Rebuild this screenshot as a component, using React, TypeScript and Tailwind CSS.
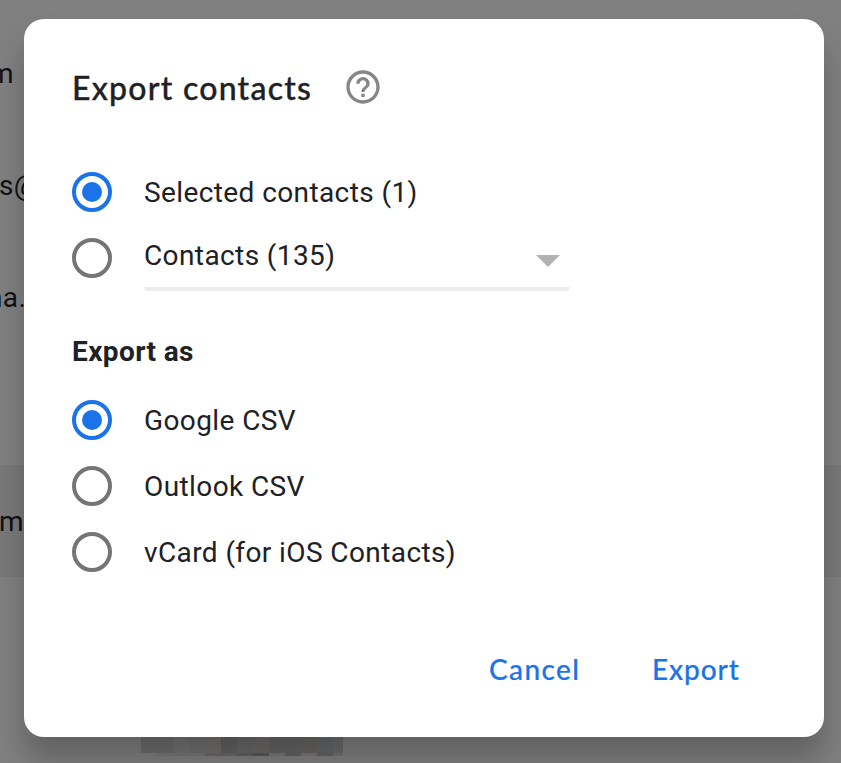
import React from "react";

const mosaicTop = [
  "#6f6f6f", "#6f6f6f", "#757575", "#6f7371", "#757270", "#646464", "#6a6a6a",
  "#6d6c69", "#666666", "#666666", "#696663", "#66696c", "#6b6d6f",
];
const mosaicBottom = [
  "transparent", "#787878", "#787878", "#787878", "#6a6a6a", "#6a6a6a", "#626262",
  "#585858", "#787878", "#646464", "#787878", "#646464", "#747474",
];

function Blocks({ colors, className }: { colors: string[]; className: string }) {
  return (
    <div className="flex w-[202px] overflow-hidden">
      {colors.map((c, i) => (
        <div key={i} className={`w-4 shrink-0 ${className}`} style={{ backgroundColor: c }} />
      ))}
    </div>
  );
}

function Row({ text = "", active = false, shift = "" }: { text?: string; active?: boolean; shift?: string }) {
  return (
    <div className={`flex h-28 items-center ${active ? "bg-[#797979]" : ""}`}>
      <span className={`pt-0.5 text-[28px] leading-8 tracking-[0.4px] text-[#101113] ${shift}`}>{text}</span>
    </div>
  );
}

function Radio({ checked = false }: { checked?: boolean }) {
  return (
    <span
      className={`flex size-10 shrink-0 items-center justify-center rounded-full border-4 ${
        checked ? "border-[#1a73e8]" : "border-[#757575]"
      }`}
    >
      {checked && <span className="size-5 rounded-full bg-[#1a73e8]" />}
    </span>
  );
}

function Option({ label, checked = false }: { label: string; checked?: boolean }) {
  return (
    <label className="flex h-10 items-center gap-8">
      <Radio checked={checked} />
      <span className="pt-0.5 whitespace-nowrap">{label}</span>
    </label>
  );
}

export default function App() {
  return (
    <div className="relative h-[763px] w-[841px] overflow-hidden bg-[#808080] font-['Roboto',sans-serif]">
      <div className="pt-[17px]">
        <Row text="m" shift="-ml-[11px]" />
        <Row text="s@" shift="-ml-px" />
        <Row text="na." shift="-ml-[13px]" />
        <Row />
        <Row text="m" active shift="-ml-px" />
        <Row />
        <div className="pt-12 pl-[141px]">
          <Blocks colors={mosaicTop} className="h-4" />
          <Blocks colors={mosaicBottom} className="h-[3px]" />
        </div>
      </div>

      <section
        role="dialog"
        className="absolute top-[19px] left-6 flex h-[718px] w-[800px] flex-col rounded-[20px] bg-white px-12 text-[28px] leading-10 tracking-[0.4px] text-[#202124] shadow-[0_24px_30px_0_rgba(0,0,0,0.24)]"
      >
        <header className="flex h-[90px] items-start gap-[31px] pt-12">
          <h1 className="w-[240px] pt-px font-['Lato',sans-serif] text-[32px] leading-10 font-medium tracking-[1.25px] whitespace-nowrap [-webkit-text-stroke:0.35px_#202124]">
            Export contacts
          </h1>
          <svg viewBox="0 0 24 24" className="size-10 fill-[#868686]" aria-label="Help">
            <path d="M11 18h2v-2h-2v2zm1-16C6.48 2 2 6.48 2 12s4.480 10 10 10 10-4.480 10-10S17.520 2 12 2zm0 18c-4.410 0-8-3.590-8-8s3.590-8 8-8 8 3.590 8 8-3.590 8-8 8zm0-14c-2.210 0-4 1.790-4 4h2c0-1.100.9-2 2-2s2 .9 2 2c0 2-3 1.750-3 5h2c0-2.250 3-2.500 3-5 0-2.210-1.790-4-4-4z" />
          </svg>
        </header>

        <div className="pt-[63px]">
          <Option label="Selected contacts (1)" checked />
          <div className="mt-[26px] flex h-[53px] gap-8">
            <Radio />
            <div className="-mt-1 flex h-[57px] w-[426px] justify-between rounded-[4px] border-b-4 border-[#ededed]">
              <span className="pt-0.5">Contacts (135)</span>
              <svg viewBox="0 0 24 12" className="mt-[21px] mr-2.5 h-3 w-6 fill-[#b2b2b2]">
                <path d="M0 0h24L12 12z" />
              </svg>
            </div>
          </div>
        </div>

        <h2 className="mt-[41px] font-bold">Export as</h2>
        <div className="mt-7 flex flex-col gap-[26px]">
          <Option label="Google CSV" checked />
          <Option label="Outlook CSV" />
          <Option label="vCard (for iOS Contacts)" />
        </div>

        <footer className="mt-[77px] flex pl-[417px] font-['Lato',sans-serif] font-medium text-[#1a73e8] [-webkit-text-stroke:0.2px_#1a73e8]">
          <button className="w-[163px] text-left tracking-[1.4px]">Cancel</button>
          <button className="tracking-[0.9px]">Export</button>
        </footer>
      </section>
    </div>
  );
}
